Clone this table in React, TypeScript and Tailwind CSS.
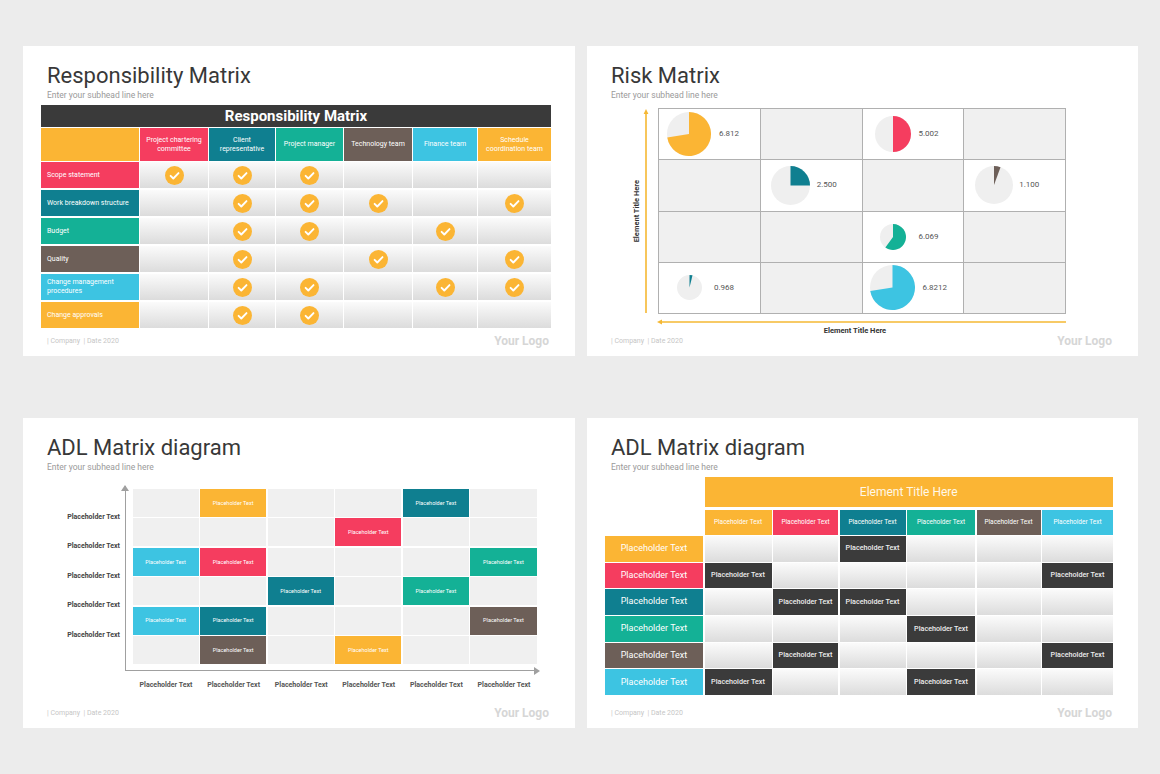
const Y = "bg-[#fbb534]";
const R = "bg-[#f53d5f]";
const T = "bg-[#0f7f90]";
const G = "bg-[#14b196]";
const B = "bg-[#6d5f58]";
const C = "bg-[#3dc4e2]";

const cellGrad = "bg-linear-to-b from-[#fbfbfb] to-[#dcdcdc]";

function Slide({ w, children }: { w: string; children: React.ReactNode }) {
  return <div className={`${w} h-[310px] bg-white flex flex-col`}>{children}</div>;
}

function Head({ title }: { title: string }) {
  return (
    <div className="pt-[19px] pl-[24px]">
      <div className="text-[22px] leading-[22px] text-[#383838]">{title}</div>
      <div className="mt-[3px] text-[8.5px] leading-[10px] text-[#9a9a9a]">Enter your subhead line here</div>
    </div>
  );
}

function Footer() {
  return (
    <div className="mt-auto mb-[9px] h-[12px] flex items-center justify-between pl-[24px] pr-[26px]">
      <span className="text-[7px] text-[#c6c6c6]">| Company &nbsp;| Date 2020</span>
      <span className="text-[12px] font-bold text-[#d6d6d6]">Your Logo</span>
    </div>
  );
}

function CheckDot() {
  return (
    <svg width="19" height="19" viewBox="0 0 19 19">
      <circle cx="9.5" cy="9.5" r="9.5" fill="#fbb534" />
      <path d="M5.6 9.8l2.7 2.7 5.2-5.4" fill="none" stroke="#fff" strokeWidth="1.9" strokeLinecap="round" strokeLinejoin="round" />
    </svg>
  );
}

const rmCols = [
  { label: "Project chartering committee", c: R },
  { label: "Client representative", c: T },
  { label: "Project manager", c: G },
  { label: "Technology team", c: B },
  { label: "Finance team", c: C },
  { label: "Schedule coordination team", c: Y },
];

const rmRows = [
  { label: "Scope statement", c: R, checks: [1, 2, 3] },
  { label: "Work breakdown structure", c: T, checks: [2, 3, 4, 6] },
  { label: "Budget", c: G, checks: [2, 3, 5] },
  { label: "Quality", c: B, checks: [2, 4, 6] },
  { label: "Change management procedures", c: C, checks: [2, 3, 5, 6] },
  { label: "Change approvals", c: Y, checks: [2, 3] },
];

const rmGrid = "grid grid-cols-[98px_68px_66px_67px_68px_64px_73px] gap-x-px";

function ResponsibilitySlide() {
  return (
    <Slide w="w-[552px]">
      <Head title="Responsibility Matrix" />
      <div className="mt-[5px] ml-[18px] w-[510px] flex flex-col">
        <div className="h-[22px] bg-[#3a3a3a] flex items-center justify-center text-[15px] font-bold text-white">
          Responsibility Matrix
        </div>
        <div className={`${rmGrid} mt-[1px] h-[33px]`}>
          <div className={Y} />
          {rmCols.map((col) => (
            <div key={col.label} className={`${col.c} flex items-center justify-center px-[3px] text-center text-[7px] leading-[9px] text-white`}>
              {col.label}
            </div>
          ))}
        </div>
        <div className="mt-[1px] flex flex-col gap-[2px]">
          {rmRows.map((row) => (
            <div key={row.label} className={`${rmGrid} h-[26px]`}>
              <div className={`${row.c} flex items-center px-[6px] text-[7px] leading-[9px] text-white`}>{row.label}</div>
              {[1, 2, 3, 4, 5, 6].map((i) => (
                <div key={i} className={`${cellGrad} flex items-center justify-center`}>
                  {row.checks.includes(i) && <CheckDot />}
                </div>
              ))}
            </div>
          ))}
        </div>
      </div>
      <Footer />
    </Slide>
  );
}

function Pie({ r, deg, color }: { r: number; deg: number; color: string }) {
  const a = (deg * Math.PI) / 180;
  const x = r + r * Math.sin(a);
  const y = r - r * Math.cos(a);
  const large = deg > 180 ? 1 : 0;
  return (
    <svg width={r * 2} height={r * 2}>
      <circle cx={r} cy={r} r={r} fill="#efefef" />
      <path d={`M${r},${r} L${r},0 A${r},${r} 0 ${large} 1 ${x},${y} Z`} fill={color} />
    </svg>
  );
}

type PieCell = { r: number; deg: number; color: string; label: string; lx: string } | null;

const riskCells: PieCell[] = [
  { r: 22, deg: 261, color: "#fbb534", label: "6.812", lx: "ml-0" },
  null,
  { r: 18, deg: 180, color: "#f53d5f", label: "5.002", lx: "-ml-[4px]" },
  null,
  null,
  { r: 19.5, deg: 90, color: "#0f7f90", label: "2.500", lx: "-ml-[4px]" },
  null,
  { r: 19, deg: 20, color: "#6d5f58", label: "1.100", lx: "-ml-[5px]" },
  null,
  null,
  { r: 13, deg: 216, color: "#14b196", label: "6.069", lx: "-ml-[4px]" },
  null,
  { r: 12.5, deg: 14, color: "#0f7f90", label: "0.968", lx: "-ml-[5px]" },
  null,
  { r: 22.5, deg: 261, color: "#3dc4e2", label: "6.8212", lx: "ml-0" },
  null,
];

function RiskSlide() {
  return (
    <Slide w="w-[551px]">
      <Head title="Risk Matrix" />
      <div className="mt-[8px] ml-[44px] flex">
        <div className="w-[12px] h-[206px] flex items-center justify-center">
          <span className="[writing-mode:vertical-rl] rotate-180 whitespace-nowrap text-[7.5px] leading-[8px] font-bold text-[#333]">
            Element Title Here
          </span>
        </div>
        <svg width="8" height="206" className="-ml-px">
          <line x1="4" y1="5" x2="4" y2="205" stroke="#f5b833" strokeWidth="1.6" />
          <polygon points="4,1 1.6,6 6.4,6" fill="#f5b833" />
        </svg>
        <div className="ml-[8px] w-[408px] h-[206px] grid grid-cols-4 grid-rows-4 gap-px bg-[#b0b0b0] border border-[#b0b0b0]">
          {riskCells.map((cell, i) =>
            cell ? (
              <div key={i} className="bg-white flex items-center">
                <div className="w-[60px] flex justify-center">
                  <Pie r={cell.r} deg={cell.deg} color={cell.color} />
                </div>
                <span className={`${cell.lx} text-[8px] text-[#555]`}>{cell.label}</span>
              </div>
            ) : (
              <div key={i} className="bg-[#f0f0f0]" />
            )
          )}
        </div>
      </div>
      <svg width="411" height="8" className="mt-[4px] ml-[69px]">
        <line x1="6" y1="4" x2="410" y2="4" stroke="#f5b833" strokeWidth="1.6" />
        <polygon points="1,4 6,1.6 6,6.4" fill="#f5b833" />
      </svg>
      <div className="mt-[1px] ml-[64px] w-[408px] text-center text-[7.5px] leading-[8px] font-bold text-[#333]">
        Element Title Here
      </div>
      <Footer />
    </Slide>
  );
}

const adl = [
  [null, Y, null, null, T, null],
  [null, null, null, R, null, null],
  [C, R, null, null, null, G],
  [null, null, T, null, G, null],
  [C, T, null, null, null, B],
  [null, B, null, Y, null, null],
];

function AdlSlide() {
  return (
    <Slide w="w-[552px]">
      <Head title="ADL Matrix diagram" />
      <div className="mt-[14px] flex">
        <div className="w-[97px] pt-[16px] flex flex-col">
          {[0, 1, 2, 3, 4].map((i) => (
            <div key={i} className="h-[29.5px] flex items-center justify-end text-[7px] font-bold text-[#444]">
              Placeholder Text
            </div>
          ))}
        </div>
        <div className="relative ml-[5px] border-l-[1.5px] border-b-[1.5px] border-[#a0a0a0] pl-[6.5px] pt-[3px] pb-[6px] pr-px">
          <div className="absolute -left-[4.75px] -top-[1px] w-0 h-0 border-l-[4px] border-r-[4px] border-b-[6px] border-l-transparent border-r-transparent border-b-[#a0a0a0]" />
          <div className="absolute -right-[2px] -bottom-[4.75px] w-0 h-0 border-t-[4px] border-b-[4px] border-l-[6px] border-t-transparent border-b-transparent border-l-[#a0a0a0]" />
          <div className="w-[404px] h-[175px] grid grid-cols-6 grid-rows-6 gap-[1.5px]">
            {adl.flat().map((c, i) => (
              <div key={i} className={`${c ?? "bg-[#f0f0f0]"} flex items-center justify-center text-[5.5px] text-white`}>
                {c ? "Placeholder Text" : ""}
              </div>
            ))}
          </div>
        </div>
      </div>
      <div className="mt-[9.5px] ml-[110px] w-[404px] grid grid-cols-6 gap-[1.5px]">
        {[0, 1, 2, 3, 4, 5].map((i) => (
          <div key={i} className="text-center text-[7px] leading-[9px] font-bold text-[#555]">
            Placeholder Text
          </div>
        ))}
      </div>
      <Footer />
    </Slide>
  );
}

const tblCols = [Y, R, T, G, B, C];
const tblRows = [
  { c: Y, dark: [3] },
  { c: R, dark: [1, 6] },
  { c: T, dark: [2, 3] },
  { c: G, dark: [4] },
  { c: B, dark: [2, 6] },
  { c: C, dark: [1, 4] },
];

function TableSlide() {
  return (
    <Slide w="w-[551px]">
      <Head title="ADL Matrix diagram" />
      <div className="mt-[5px] ml-[18px] grid grid-cols-[98px_67px_65px_66px_68px_64px_71px] grid-rows-[32px_25px_repeat(6,25.7px)] gap-x-[1.5px] gap-y-px">
        <div />
        <div className={`${Y} col-span-6 h-[30px] flex items-center justify-center text-[12px] text-[#fff8e8]`}>
          Element Title Here
        </div>
        <div />
        {tblCols.map((c, i) => (
          <div key={i} className={`${c} flex items-center justify-center text-[6.5px] text-white`}>
            Placeholder Text
          </div>
        ))}
        {tblRows.map((row, r) => [
          <div key={`l${r}`} className={`${row.c} flex items-center justify-center text-[9px] text-white`}>
            Placeholder Text
          </div>,
          ...[1, 2, 3, 4, 5, 6].map((i) =>
            row.dark.includes(i) ? (
              <div key={`${r}-${i}`} className="bg-[#3b3b3b] flex items-center justify-center text-[7.2px] font-medium text-[#eeeeee]">
                Placeholder Text
              </div>
            ) : (
              <div key={`${r}-${i}`} className={cellGrad} />
            )
          ),
        ])}
      </div>
      <Footer />
    </Slide>
  );
}

export default function App() {
  return (
    <div className="w-[1160px] h-[774px] bg-[#ececec] pt-[46px] pl-[23px] flex flex-col gap-[62px] font-['Roboto',sans-serif]">
      <div className="flex gap-[12px]">
        <ResponsibilitySlide />
        <RiskSlide />
      </div>
      <div className="flex gap-[12px]">
        <AdlSlide />
        <TableSlide />
      </div>
    </div>
  );
}
